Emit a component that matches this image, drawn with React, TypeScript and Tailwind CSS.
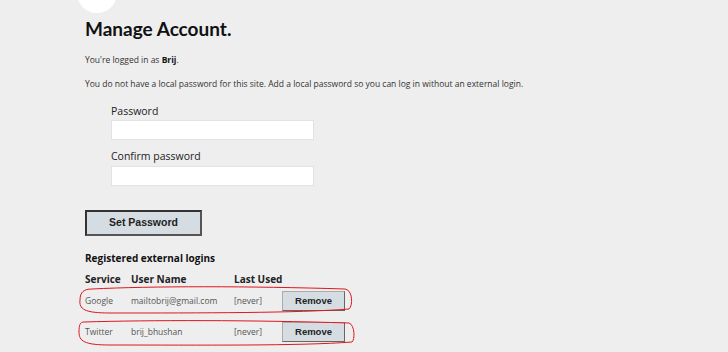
export default function App() {
  const logins = [
    { service: "Google", user: "mailtobrij@gmail.com", last: "[never]" },
    { service: "Twitter", user: "brij_bhushan", last: "[never]" },
  ];

  return (
    <div className="relative min-h-[352px] w-[728px] overflow-hidden bg-[#eeeeee] font-['Open_Sans',sans-serif] text-[#333]">
      <div className="absolute left-[77px] top-[-27px] h-[40px] w-[40px] rounded-full bg-white" />

      <div className="pl-[85px] pt-[17px]">
        <h1 className="font-['Lato',sans-serif] text-[19px] font-bold leading-[24px] text-[#111]">Manage Account.</h1>

        <p className="mt-[13px] text-[8.5px] leading-[12px]">
          You're logged in as <strong className="text-[#111]">Brij</strong>.
        </p>
        <p className="mt-[12px] text-[8.5px] leading-[12px]">
          You do not have a local password for this site. Add a local password so you can log in without an external login.
        </p>

        <form className="ml-[26px] mt-[14px] flex w-[203px] flex-col">
          <label className="h-[14px] text-[10.5px] leading-[14px] text-[#222]">Password</label>
          <input type="password" className="mt-[2px] h-[20px] border border-[#e2e2e2] bg-white" />
          <label className="mt-[9px] h-[14px] text-[10.5px] leading-[14px] text-[#222]">Confirm password</label>
          <input type="password" className="mt-[3px] h-[20px] border border-[#e2e2e2] bg-white" />
        </form>

        <button className="mt-[24px] h-[26px] w-[117px] border-2 border-[#333] border-b-[#555] border-r-[#555] bg-[#d5dde3] font-['Liberation_Sans',sans-serif] text-[10.5px] font-bold text-[#222]">
          Set Password
        </button>

        <h3 className="mt-[15px] text-[10px] font-bold leading-[14px] text-[#111]">Registered external logins</h3>

        <div className="mt-[7px] w-[270px]">
          <div className="grid grid-cols-[46px_103px_48px_auto] items-center whitespace-nowrap text-[10px] font-bold leading-[14px] text-[#222]">
            <span>Service</span>
            <span>User Name</span>
            <span>Last Used</span>
            <span />
          </div>
          {logins.map((l, i) => (
            <div
              key={l.service}
              className={`grid grid-cols-[46px_103px_48px_auto] items-center whitespace-nowrap text-[8.5px] text-[#555] ${i === 0 ? "mt-[5px]" : "mt-[11px]"}`}
            >
              <span>{l.service}</span>
              <span>{l.user}</span>
              <span>{l.last}</span>
              <button className="h-[20px] w-[63px] border border-[#aaa] border-b-[#666] border-r-[#666] bg-[#d5dde3] font-['Liberation_Sans',sans-serif] text-[9.5px] font-bold text-[#222]">
                Remove
              </button>
            </div>
          ))}
        </div>
      </div>

      <svg className="pointer-events-none absolute left-0 top-0" width="728" height="352" fill="none" stroke="#e0161c" strokeWidth="1">
        <path d="M92 289 C150 286 250 286 345 289 C353 290 353 306 349 309 C300 313 200 313 110 313 C84 313 79 309 80 300 C80 292 84 289 92 289" />
        <path d="M84 322 C150 320 250 320 349 323 C355 325 355 340 352 342 C300 346 200 345 110 345 C84 345 79 341 79 332 C79 325 80 322 84 322" />
      </svg>
    </div>
  );
}
